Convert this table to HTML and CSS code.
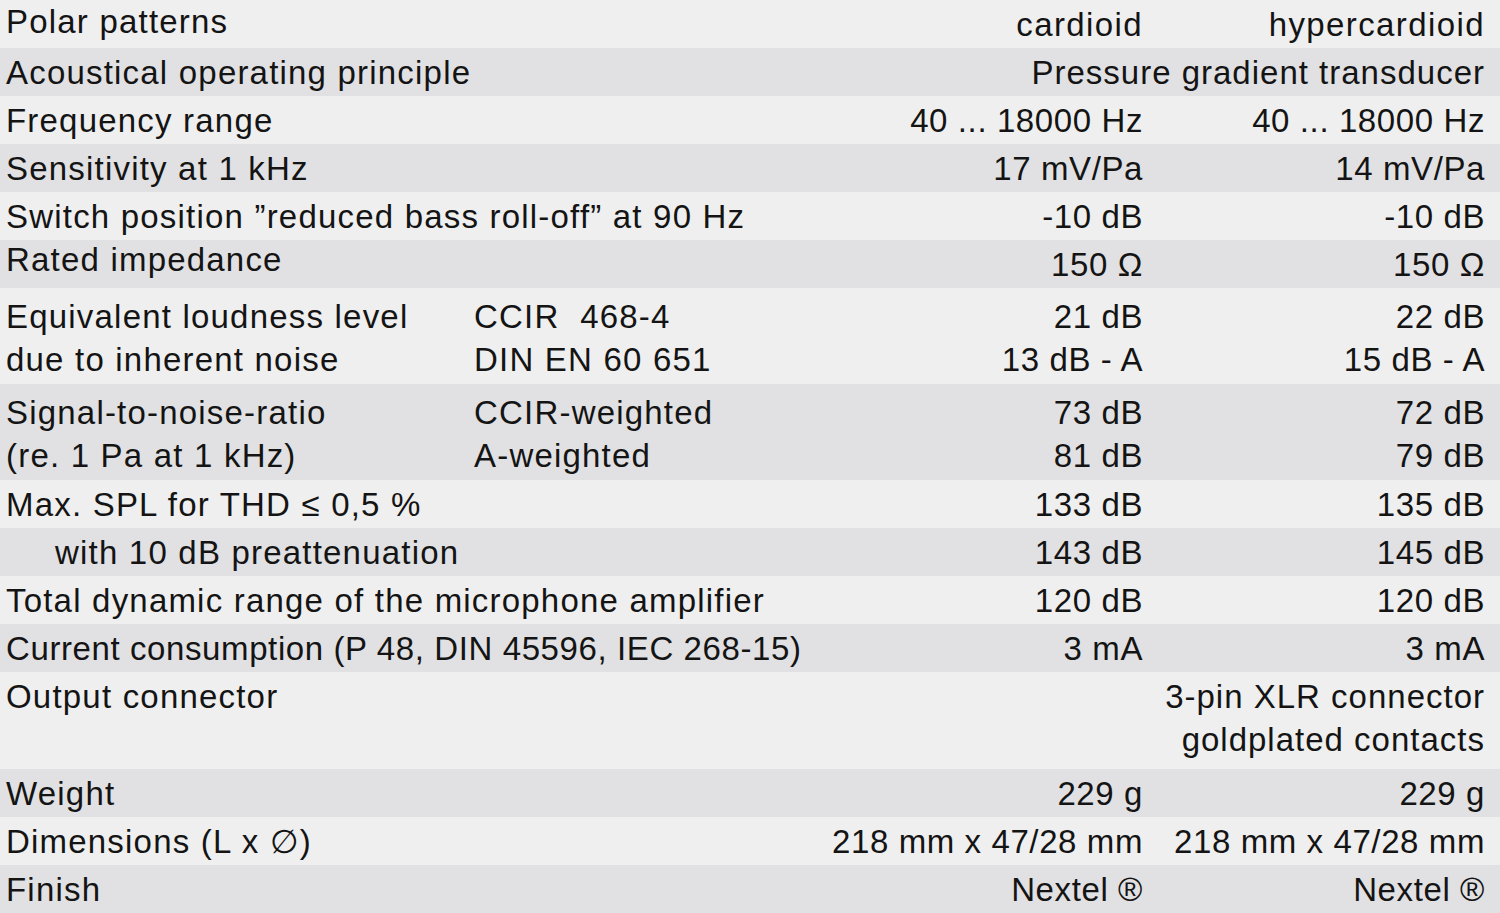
FILE: index.html
```html
<!DOCTYPE html>
<html lang="en">
<head>
<meta charset="utf-8">
<title>Technical data</title>
<link rel="stylesheet" href="styles.css">
</head>
<body>
<div class="specs">
  <div class="row light">
    <div class="label wide first">Polar patterns</div>
    <div class="v c2">cardioid</div>
    <div class="v c3">hypercardioid</div>
  </div>
  <div class="row dark">
    <div class="label wide">Acoustical operating principle</div>
    <div class="v span">Pressure gradient transducer</div>
  </div>
  <div class="row light">
    <div class="label wide">Frequency range</div>
    <div class="v c2 num">40 ... 18000 Hz</div>
    <div class="v c3 num">40 ... 18000 Hz</div>
  </div>
  <div class="row dark">
    <div class="label wide">Sensitivity at 1 kHz</div>
    <div class="v c2 num">17 mV/Pa</div>
    <div class="v c3 num">14 mV/Pa</div>
  </div>
  <div class="row light">
    <div class="label wide">Switch position ”reduced bass roll-off” at 90 Hz</div>
    <div class="v c2 num">-10 dB</div>
    <div class="v c3 num">-10 dB</div>
  </div>
  <div class="row dark">
    <div class="label wide up">Rated impedance</div>
    <div class="v c2 num">150 Ω</div>
    <div class="v c3 num">150 Ω</div>
  </div>
  <div class="row light double">
    <div class="label">Equivalent loudness level<br>due to inherent noise</div>
    <div class="sub">CCIR&nbsp; 468-4<br>DIN EN 60 651</div>
    <div class="v c2 num">21 dB<br>13 dB - A</div>
    <div class="v c3 num">22 dB<br>15 dB - A</div>
  </div>
  <div class="row dark double">
    <div class="label">Signal-to-noise-ratio<br>(re. 1 Pa at 1 kHz)</div>
    <div class="sub">CCIR-weighted<br>A-weighted</div>
    <div class="v c2 num">73 dB<br>81 dB</div>
    <div class="v c3 num">72 dB<br>79 dB</div>
  </div>
  <div class="row light">
    <div class="label wide">Max. SPL for THD ≤ 0,5 %</div>
    <div class="v c2 num">133 dB</div>
    <div class="v c3 num">135 dB</div>
  </div>
  <div class="row dark">
    <div class="label wide indent">with 10 dB preattenuation</div>
    <div class="v c2 num">143 dB</div>
    <div class="v c3 num">145 dB</div>
  </div>
  <div class="row light">
    <div class="label wide">Total dynamic range of the microphone amplifier</div>
    <div class="v c2 num">120 dB</div>
    <div class="v c3 num">120 dB</div>
  </div>
  <div class="row dark">
    <div class="label wide tight">Current consumption (P 48, DIN 45596, IEC 268-15)</div>
    <div class="v c2 num">3 mA</div>
    <div class="v c3 num">3 mA</div>
  </div>
  <div class="row light double output">
    <div class="label wide">Output connector</div>
    <div class="v span">3-pin XLR connector<br>goldplated contacts</div>
  </div>
  <div class="row dark">
    <div class="label wide">Weight</div>
    <div class="v c2 num">229 g</div>
    <div class="v c3 num">229 g</div>
  </div>
  <div class="row light">
    <div class="label wide">Dimensions (L x ∅)</div>
    <div class="v c2 num">218 mm x 47/28 mm</div>
    <div class="v c3 num">218 mm x 47/28 mm</div>
  </div>
  <div class="row dark last">
    <div class="label wide">Finish</div>
    <div class="v c2 num">Nextel ®</div>
    <div class="v c3 num">Nextel ®</div>
  </div>
</div>
</body>
</html>
```

FILE: styles.css
```css
html, body {
  margin: 0;
  padding: 0;
  background: #efefef;
}

.specs {
  width: 1500px;
  font-family: "Liberation Sans", Arial, "DejaVu Sans", sans-serif;
  font-size: 33px;
  letter-spacing: 1.2px;
  color: #141414;
}

.row {
  display: grid;
  grid-template-columns: 468px 332px 347px 353px;
  height: 48px;
  box-sizing: border-box;
  padding-top: 3px;
  line-height: 43px;
  white-space: nowrap;
}

.row.double {
  height: 96px;
  padding-top: 7px;
}

.row.output {
  height: 97px;
  padding-top: 3px;
}

.row.last {
  height: 49px;
}

.light { background: #efefef; }
.dark { background: #e1e1e3; }

.label {
  grid-column: 1;
  padding-left: 6px;
}

.label.wide {
  grid-column: 1 / 3;
}

.label.first {
  margin-top: -3px;
}

.label.indent {
  padding-left: 55px;
}

.label.tight {
  letter-spacing: 0.6px;
}

.label.up {
  margin-top: -5px;
}

.sub {
  grid-column: 2;
  padding-left: 6px;
}

.v {
  text-align: right;
  letter-spacing: 1.4px;
}

.v.num {
  letter-spacing: 0.6px;
}

.c2 {
  grid-column: 3;
  padding-right: 4px;
}

.c3 {
  grid-column: 4;
  padding-right: 15px;
}

.span {
  grid-column: 3 / 5;
  padding-right: 15px;
  letter-spacing: 1px;
}
```
